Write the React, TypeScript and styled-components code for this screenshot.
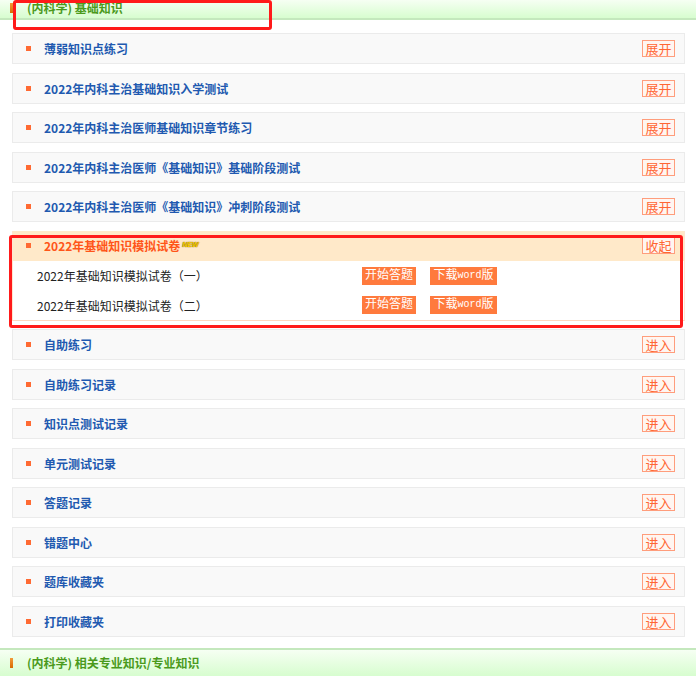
import styled, { createGlobalStyle } from "styled-components";

const GlobalStyle = createGlobalStyle`
  html, body {
    margin: 0;
    padding: 0;
    background: #ffffff;
  }
  body {
    font-family: "Noto Sans CJK SC", "Liberation Sans", sans-serif;
    font-size: 12px;
    width: 696px;
    height: 676px;
    overflow: hidden;
  }
  * {
    box-sizing: border-box;
  }
`;

const Page = styled.div`
  position: relative;
  width: 696px;
  height: 676px;
  overflow: hidden;
`;

const CategoryBar = styled.div<{ $top?: boolean }>`
  display: flex;
  align-items: center;
  gap: 14px;
  height: ${(p) => (p.$top ? "20px" : "28px")};
  padding: ${(p) => (p.$top ? "0 0 3px 10px" : "0 0 0 10px")};
  background: linear-gradient(#f6fff3, #d7fdcf);
  border-bottom: ${(p) => (p.$top ? "2px solid #c4e8bd" : "none")};
  border-top: ${(p) => (p.$top ? "none" : "2px solid #c4e8bd")};
`;

const CategoryMark = styled.span`
  width: 3px;
  height: 10px;
  background: linear-gradient(#f29a3a, #d96a00);
`;

const CategoryTitle = styled.span`
  color: #4a9a1c;
  font-size: 12px;
  font-weight: 700;
  line-height: 1;
`;

const List = styled.div`
  display: flex;
  flex-direction: column;
  gap: 8.5px;
  padding: 13px 11px 11px 12px;
`;

const Row = styled.div`
  display: flex;
  align-items: center;
  height: 31px;
  padding: 0 9px 0 13px;
  background: #f9f9f9;
  border: 1px solid #ebebeb;
`;

const Bullet = styled.span`
  width: 5px;
  height: 5px;
  background: #ff6a33;
  margin-right: 13px;
  flex-shrink: 0;
`;

const RowTitle = styled.span<{ $active?: boolean }>`
  flex: 1;
  color: ${(p) => (p.$active ? "#ff5519" : "#2159b0")};
  font-weight: 700;
  font-size: 12px;
  display: flex;
  align-items: center;
  gap: 2px;
`;

const NewBadge = styled.span`
  font-family: "Liberation Sans", sans-serif;
  font-size: 7px;
  font-weight: 900;
  font-style: italic;
  color: #ffd200;
  text-shadow: 0 0 1px #7a5a00, 0 0 1px #7a5a00;
  letter-spacing: -0.2px;
  margin-top: -2px;
`;

const Toggle = styled.span`
  display: flex;
  align-items: center;
  justify-content: center;
  width: 33px;
  height: 17px;
  border: 1px solid #ff9d7c;
  background: #fff6f1;
  color: #ff6633;
  font-size: 13px;
  line-height: 1;
`;

const Section = styled.div`
  display: flex;
  flex-direction: column;
  border-left: 1px solid #ffe6d0;
  border-right: 1px solid #ffe6d0;
  border-bottom: 1px solid #ffd6bf;
`;

const SectionHead = styled(Row)`
  height: 30px;
  background: #ffe9c9;
  border: none;
`;

const PaperRow = styled.div`
  display: flex;
  align-items: center;
  height: 29.5px;
  padding-left: 24px;
  padding-top: 1px;
  background: #ffffff;
`;

const PaperName = styled.span`
  width: 325px;
  color: #222222;
  font-size: 12px;
`;

const ActionButton = styled.span<{ $wide?: boolean }>`
  display: flex;
  align-items: center;
  justify-content: center;
  height: 18px;
  width: ${(p) => (p.$wide ? "67px" : "54px")};
  margin-right: 14px;
  background: #ff7a3d;
  color: #ffffff;
  font-family: "Liberation Mono", "Noto Sans CJK SC", monospace;
  font-size: 12px;
  line-height: 1;
`;

const WordText = styled.span`
  font-size: 10px;
`;

const Annotation = styled.div`
  position: absolute;
  border: 3px solid #ff1a1a;
  border-radius: 3px;
  pointer-events: none;
`;

const collapsed = [
  "薄弱知识点练习",
  "2022年内科主治基础知识入学测试",
  "2022年内科主治医师基础知识章节练习",
  "2022年内科主治医师《基础知识》基础阶段测试",
  "2022年内科主治医师《基础知识》冲刺阶段测试",
];

const papers = ["2022年基础知识模拟试卷（一）", "2022年基础知识模拟试卷（二）"];

const tools = [
  "自助练习",
  "自助练习记录",
  "知识点测试记录",
  "单元测试记录",
  "答题记录",
  "错题中心",
  "题库收藏夹",
  "打印收藏夹",
];

export default function App() {
  return (
    <Page>
      <GlobalStyle />
      <CategoryBar $top>
        <CategoryMark />
        <CategoryTitle>(内科学) 基础知识</CategoryTitle>
      </CategoryBar>
      <List>
        {collapsed.map((t) => (
          <Row key={t}>
            <Bullet />
            <RowTitle>{t}</RowTitle>
            <Toggle>展开</Toggle>
          </Row>
        ))}
        <Section>
          <SectionHead>
            <Bullet />
            <RowTitle $active>
              2022年基础知识模拟试卷<NewBadge>NEW</NewBadge>
            </RowTitle>
            <Toggle>收起</Toggle>
          </SectionHead>
          {papers.map((p) => (
            <PaperRow key={p}>
              <PaperName>{p}</PaperName>
              <ActionButton>开始答题</ActionButton>
              <ActionButton $wide>
                下载<WordText>word</WordText>版
              </ActionButton>
            </PaperRow>
          ))}
        </Section>
        {tools.map((t) => (
          <Row key={t}>
            <Bullet />
            <RowTitle>{t}</RowTitle>
            <Toggle>进入</Toggle>
          </Row>
        ))}
      </List>
      <CategoryBar>
        <CategoryMark />
        <CategoryTitle>(内科学) 相关专业知识/专业知识</CategoryTitle>
      </CategoryBar>
      <Annotation style={{ left: 13, top: 0, width: 259, height: 30 }} />
      <Annotation style={{ left: 9, top: 235, width: 674, height: 93 }} />
    </Page>
  );
}
